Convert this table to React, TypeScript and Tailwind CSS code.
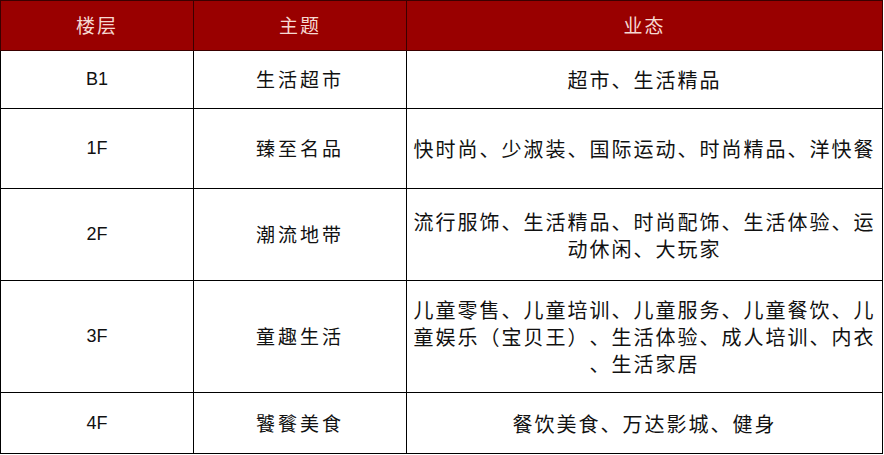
const rows = [
  { floor: 'B1', theme: '生活超市', biz: '超市、生活精品', h: 'h-[58px]' },
  { floor: '1F', theme: '臻至名品', biz: '快时尚、少淑装、国际运动、时尚精品、洋快餐', h: 'h-[80px]' },
  { floor: '2F', theme: '潮流地带', biz: '流行服饰、生活精品、时尚配饰、生活体验、运动休闲、大玩家', h: 'h-[92px]' },
  {
    floor: '3F',
    theme: '童趣生活',
    biz: '儿童零售、儿童培训、儿童服务、儿童餐饮、儿童娱乐（宝贝王）、生活体验、成人培训、内衣、生活家居',
    h: 'h-[112px]',
  },
  { floor: '4F', theme: '饕餮美食', biz: '餐饮美食、万达影城、健身', h: 'h-[61px]' },
];

const cjk = "font-['Noto_Sans_CJK_SC',sans-serif] [text-spacing-trim:space-all] [line-break:anywhere]";

export default function App() {
  return (
    <div className="w-[884px] h-[455px] bg-white overflow-hidden">
      <table className="w-[883px] table-fixed border-collapse">
        <colgroup>
          <col className="w-[193px]" />
          <col className="w-[213px]" />
          <col />
        </colgroup>
        <thead>
          <tr className="h-[50px] bg-[#990000]">
            {['楼层', '主题', '业态'].map((t) => (
              <th
                key={t}
                className={`border border-[#3a0000] ${cjk} text-[19px] font-normal tracking-[2px] text-[#f6d9d2] text-center align-middle`}
              >
                {t}
              </th>
            ))}
          </tr>
        </thead>
        <tbody>
          {rows.map((r) => (
            <tr key={r.floor} className={r.h}>
              <td className="border border-black text-center align-middle font-['Liberation_Sans',Arial,sans-serif] text-[18px] text-[#111]">
                {r.floor}
              </td>
              <td className={`border border-black text-center align-middle ${cjk} text-[19px] tracking-[3px] text-[#111]`}>
                {r.theme}
              </td>
              <td className={`border border-black text-center align-middle px-[5px] ${cjk} text-[20px] leading-[27px] tracking-[2px] text-[#111]`}>
                {r.biz}
              </td>
            </tr>
          ))}
        </tbody>
      </table>
    </div>
  );
}
